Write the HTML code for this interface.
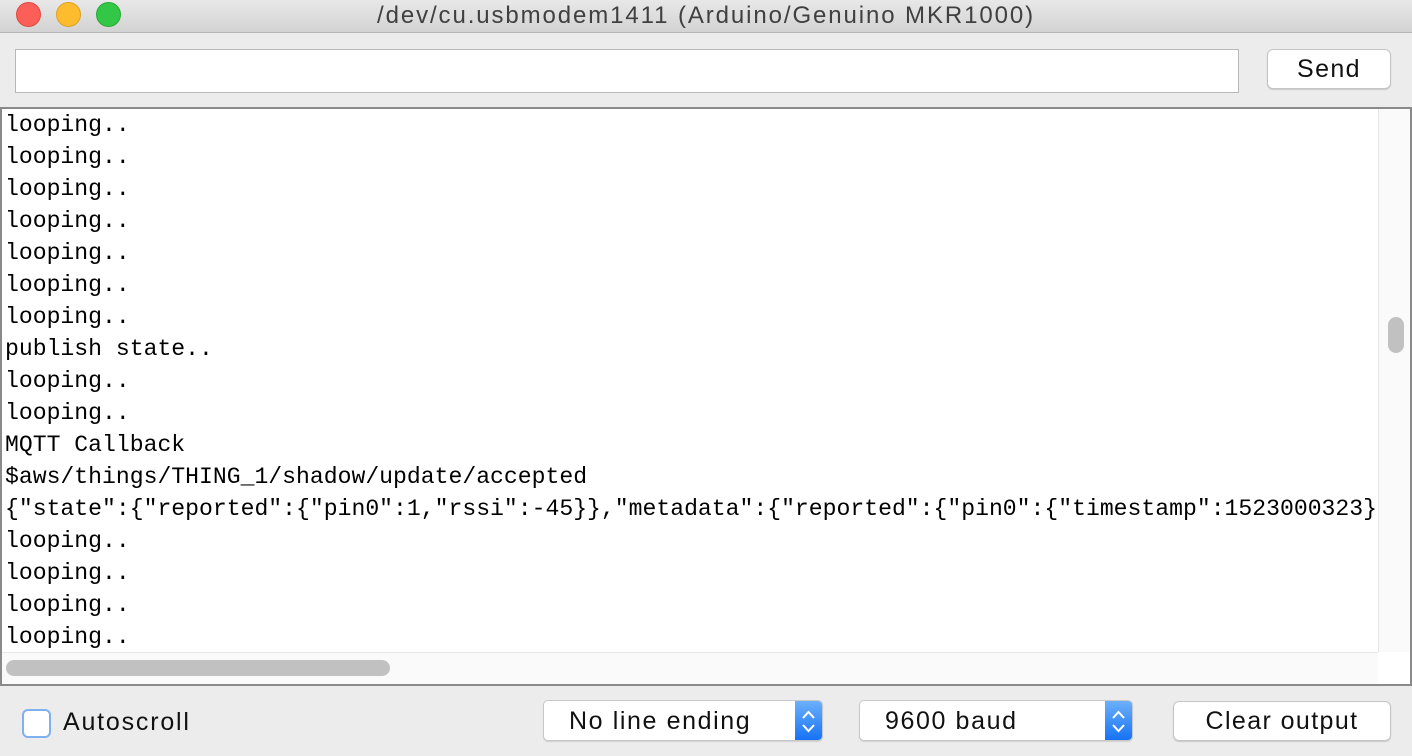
<!DOCTYPE html>
<html><head><style>
*{margin:0;padding:0;box-sizing:border-box}
body{width:1412px;height:756px;background:#ececec;position:relative;overflow:hidden;font-family:"Liberation Sans",sans-serif}
.title{position:absolute;left:0;top:0;width:1412px;height:33px;background:linear-gradient(#e8e8e8,#d3d3d3);border-bottom:1px solid #b5b5b5;text-align:center;font-size:24px;letter-spacing:1.9px;line-height:31px;color:#404040}
.dot{position:absolute;top:2px;width:25px;height:25px;border-radius:50%}
.input{position:absolute;left:15px;top:49px;width:1224px;height:44px;background:#fff;border:1px solid #b8b8b8}
.btn{position:absolute;background:#fff;border:1px solid #c4c4c4;border-radius:6px;box-shadow:0 1px 1px rgba(0,0,0,.15);font-size:25px;letter-spacing:1.4px;text-align:center;color:#111}
.area{position:absolute;left:0;top:107px;width:1412px;height:579px;border:2px solid #8a8a8a;background:#fff;overflow:hidden}
.txt{position:absolute;left:3px;top:0;width:1375px;overflow:hidden;font-family:"Liberation Mono",monospace;font-size:23.1px;line-height:32px;white-space:pre;color:#000}
.vs{position:absolute;left:1376px;top:0;width:32px;height:543px;background:#fafafa;border-left:1px solid #e6e6e6}
.hs{position:absolute;left:0;top:543px;width:1376px;height:33px;background:#fafafa;border-top:1px solid #e6e6e6}
.sel{position:absolute;top:700px;height:41px;background:#fff;border:1px solid #c8c8c8;border-radius:5px;box-shadow:0 1px 1px rgba(0,0,0,.12);font-size:25px;letter-spacing:1.6px;line-height:40px;color:#111;overflow:hidden}
.arr{position:absolute;right:0;top:0;width:27px;height:100%;background:linear-gradient(#6cb0fb,#1673f4)}
</style></head><body>
<div class="title">/dev/cu.usbmodem1411 (Arduino/Genuino MKR1000)
<div class="dot" style="left:16px;background:#fc5f57;border:1px solid #de4a42"></div>
<div class="dot" style="left:56px;background:#fdbc2e;border:1px solid #dea123"></div>
<div class="dot" style="left:96px;background:#33c748;border:1px solid #27aa35"></div>
</div>
<div class="input"></div>
<div class="btn" style="left:1267px;top:49px;width:124px;height:40px;line-height:38px">Send</div>
<div class="area">
<div class="txt">looping..
looping..
looping..
looping..
looping..
looping..
looping..
publish state..
looping..
looping..
MQTT Callback
$aws/things/THING_1/shadow/update/accepted
{"state":{"reported":{"pin0":1,"rssi":-45}},"metadata":{"reported":{"pin0":{"timestamp":1523000323},"rssi":{}}}}
looping..
looping..
looping..
looping..</div>
<div class="vs"><div style="position:absolute;left:9px;top:208px;width:16px;height:36px;border-radius:8px;background:#c1c1c1"></div></div>
<div class="hs"><div style="position:absolute;left:4px;top:7px;width:384px;height:16px;border-radius:8px;background:#c1c1c1"></div></div>
</div>
<div style="position:absolute;left:22px;top:709px;width:29px;height:29px;border:2px solid #7fb1f0;border-radius:6px;background:#fff"></div>
<div style="position:absolute;left:63px;top:708px;font-size:25px;letter-spacing:1.8px;color:#111">Autoscroll</div>
<div class="sel" style="left:543px;width:280px"><span style="padding-left:25px">No line ending</span><div class="arr"><svg width="27" height="41" viewBox="0 0 27 41"><path d="M8 17l5.5-6 5.5 6M8 24l5.5 6 5.5-6" fill="none" stroke="#fff" stroke-width="2"/></svg></div></div>
<div class="sel" style="left:859px;width:274px"><span style="padding-left:25px">9600 baud</span><div class="arr"><svg width="27" height="41" viewBox="0 0 27 41"><path d="M8 17l5.5-6 5.5 6M8 24l5.5 6 5.5-6" fill="none" stroke="#fff" stroke-width="2"/></svg></div></div>
<div class="btn" style="left:1173px;top:701px;width:218px;height:40px;line-height:38px">Clear output</div>
</body></html>
